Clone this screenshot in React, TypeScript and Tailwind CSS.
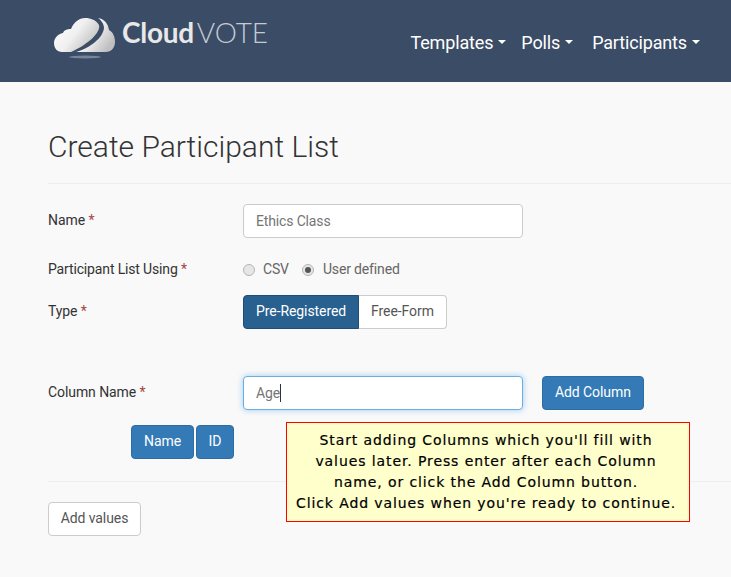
import { useId } from 'react'

function Required() {
  return <span className="text-[#a94442]"> *</span>
}

function Radio({ checked }: { checked?: boolean }) {
  return (
    <span className="flex h-[12px] w-[12px] items-center justify-center rounded-full border border-[#b5b5b5] bg-[#e6e6e6]">
      {checked && <span className="h-[6px] w-[6px] rounded-full bg-[#555555]" />}
    </span>
  )
}

function Caret() {
  return <span className="ml-[5px] inline-block h-0 w-0 translate-y-[-2px] border-x-[4px] border-t-[4px] border-x-transparent border-t-white align-middle" />
}

function CloudLogo() {
  const id = useId()
  return (
    <svg width="64" height="50" viewBox="0 0 64 50" className="shrink-0">
      <defs>
        <linearGradient id={id} x1="0" y1="0" x2="1" y2="0.6">
          <stop offset="0" stopColor="#ffffff" />
          <stop offset="0.55" stopColor="#f0f0f0" />
          <stop offset="1" stopColor="#bfbfbf" />
        </linearGradient>
      </defs>
      <path
        d="M8 41 C3 41 0 37 0 32 C0 27 4 23 9 22 C10 19 13 18 17 18 C20 11 25 7 31 7 C37 7 42 9 45 14 C47 21 35 33 17 41 Z"
        fill={`url(#${id})`}
      />
      <path
        d="M22 41 C36 37 49 27 50 17 C50 13 47 9 44 7 C50 8 54 12 55 19 C59 21 61 26 61 31 C61 37 57 41 52 41 Z"
        fill={`url(#${id})`}
      />
      <ellipse cx="31" cy="46" rx="16" ry="1.5" fill="#76859a" />
    </svg>
  )
}

export default function App() {
  return (
    <div className="relative h-[577px] overflow-hidden bg-[#f9f9f9] font-['Roboto',sans-serif] text-[14px] tracking-[-0.08px] text-[#333333]">
      <nav className="flex h-[82px] items-start justify-between bg-[#3b4c66] pl-[54px] pr-[31px]">
        <div className="flex items-center pt-[11px]">
          <CloudLogo />
          <span className="ml-[4px] mt-[-8px] flex items-baseline text-[28px] leading-[50px] tracking-normal text-[#e8e8e8]">
            <span className="font-['Lato',sans-serif] font-bold tracking-[-0.3px]">Cloud</span>
            <span className="ml-[3px] font-['Lato',sans-serif] font-light text-[#c5cbd3]">VOTE</span>
          </span>
        </div>
        <div className="flex pt-[32px] text-[18px] leading-[22px] tracking-[-0.15px] text-white">
          <span>Templates<Caret /></span>
          <span className="ml-[15px]">Polls<Caret /></span>
          <span className="ml-[19px]">Participants<Caret /></span>
        </div>
      </nav>

      <main className="pl-[48px]">
        <h1 className="pt-[48px] text-[30px] font-light leading-[34px] tracking-normal text-[#333333]">Create Participant List</h1>
        <hr className="mt-[19px] border-[#eeeeee]" />

        <div className="mt-[20px] flex items-center">
          <label className="w-[195px] pb-[2px]">Name<Required /></label>
          <div className="flex h-[34px] w-[280px] items-center rounded border border-[#cccccc] bg-white px-[12px] tracking-[-0.15px] text-[#757575]">Ethics Class</div>
        </div>

        <div className="mt-[21px] flex items-center">
          <label className="w-[195px] tracking-[-0.15px]">Participant List Using<Required /></label>
          <div className="flex items-center tracking-[-0.15px] text-[#666666]">
            <Radio />
            <span className="ml-[8px]">CSV</span>
            <span className="ml-[13px]"><Radio checked /></span>
            <span className="ml-[9px]">User defined</span>
          </div>
        </div>

        <div className="mt-[15px] flex items-center">
          <label className="w-[195px] pb-[2px]">Type<Required /></label>
          <div className="flex h-[34px]">
            <span className="flex items-center rounded-l border border-[#204d74] bg-[#286090] px-[12px] pb-[2px] text-white">Pre-Registered</span>
            <span className="flex items-center rounded-r border border-l-0 border-[#cccccc] bg-white px-[12px] pb-[2px] text-[#555555]">Free-Form</span>
          </div>
        </div>

        <div className="mt-[47px] flex items-center">
          <label className="w-[195px] pb-[2px]">Column Name<Required /></label>
          <div className="flex h-[34px] w-[280px] items-center rounded border border-[#66afe9] bg-white px-[12px] text-[#757575] shadow-[0_0_6px_rgba(102,175,233,0.6)]">
            Age<span className="h-[18px] w-px bg-[#333333]" />
          </div>
          <span className="ml-[19px] flex h-[34px] items-center rounded border border-[#2e6da4] bg-[#337ab7] px-[12px] pb-[2px] text-white">Add Column</span>
        </div>

        <div className="ml-[83px] mt-[15px] flex gap-[2px]">
          <span className="flex h-[34px] items-center rounded border border-[#2e6da4] bg-[#337ab7] px-[12px] pb-[2px] text-white">Name</span>
          <span className="flex h-[34px] w-[38px] items-center justify-center rounded border border-[#2e6da4] bg-[#337ab7] pb-[2px] text-white">ID</span>
        </div>

        <hr className="mt-[22px] border-[#eeeeee]" />

        <span className="mt-[20px] inline-flex h-[34px] w-[93px] items-center justify-center rounded border border-[#cccccc] bg-white pb-[2px] text-[#555555]">Add values</span>
      </main>

      <div className="absolute left-[286px] top-[422px] flex h-[100px] w-[404px] items-center justify-center border border-[#ff0000] bg-[#ffffcc] pr-[4px] text-center font-['DejaVu_Sans',sans-serif] text-[14px] leading-[21px] tracking-[0.9px] text-black [-webkit-text-stroke:0.2px_black]">
        <p>
          Start adding Columns which you'll fill with<br />
          values later. Press enter after each Column<br />
          name, or click the Add Column button.<br />
          Click Add values when you're ready to continue.
        </p>
      </div>
    </div>
  )
}
